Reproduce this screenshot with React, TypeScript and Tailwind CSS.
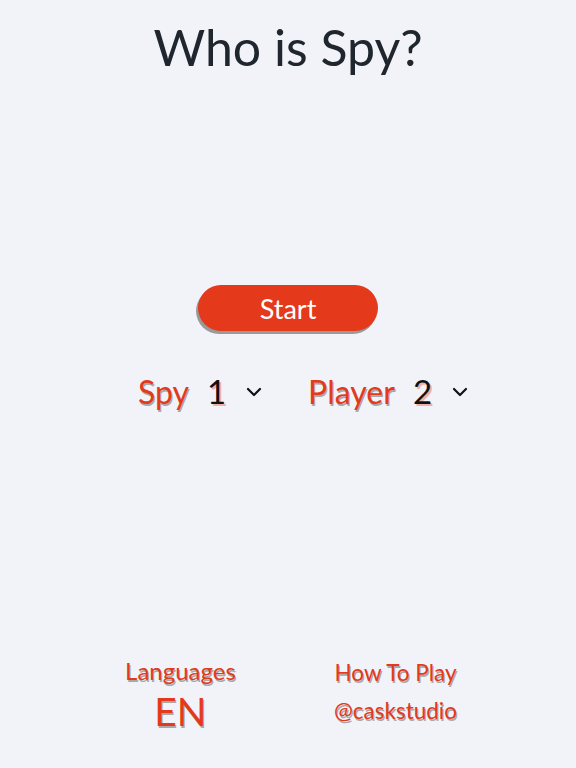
import React from "react";

function Chevron() {
  return (
    <svg width="16" height="10" viewBox="0 0 16 10" className="ml-[20px]">
      <path d="M2 2 L8 8 L14 2" fill="none" stroke="#111" strokeWidth="2.2" strokeLinecap="round" strokeLinejoin="round" />
    </svg>
  );
}

export default function App() {
  const font = { fontFamily: "Lato, 'Open Sans', sans-serif" };
  return (
    <div className="w-full h-[768px] bg-[#f2f3f8] flex flex-col items-center" style={font}>
      <h1 className="mt-[18px] text-[50px] leading-[58px] text-[#20262e] font-normal">Who is Spy?</h1>
      <button className="mt-[209px] w-[180px] h-[46px] rounded-full bg-[#e4391a] text-white text-[27px] leading-none shadow-[-2px_3px_0_#9a9a9a]">
        Start
      </button>
      <div className="mt-[36px] ml-[30px] flex items-center">
        <div className="flex items-center">
          <span className="text-[32px] text-[#e4391a] [text-shadow:1px_2px_0_#a8a8a8]">Spy</span>
          <span className="ml-[18px] text-[33px] text-[#111] [text-shadow:2px_2px_0_#f0b0a8]">1</span>
          <Chevron />
        </div>
        <div className="ml-[46px] flex items-center">
          <span className="text-[32px] text-[#e4391a] [text-shadow:1px_2px_0_#a8a8a8]">Player</span>
          <span className="ml-[18px] text-[33px] text-[#111] [text-shadow:2px_2px_0_#f0b0a8]">2</span>
          <Chevron />
        </div>
      </div>
      <div className="mt-auto mb-[36px] flex">
        <div className="w-[215px] flex flex-col items-center">
          <span className="text-[24px] leading-[26px] text-[#e4391a] [text-shadow:1px_2px_0_#a8a8a8]">Languages</span>
          <span className="mt-[6px] text-[39px] leading-[42px] text-[#e4391a] [text-shadow:1px_2px_0_#a8a8a8]">EN</span>
        </div>
        <div className="w-[215px] flex flex-col items-center pt-[2px]">
          <span className="text-[22.5px] leading-[26px] text-[#e4391a] [text-shadow:1px_2px_0_#a8a8a8]">How To Play</span>
          <span className="mt-[12px] text-[22.5px] leading-[26px] text-[#e4391a] [text-shadow:1px_2px_0_#a8a8a8]">@caskstudio</span>
        </div>
      </div>
    </div>
  );
}
